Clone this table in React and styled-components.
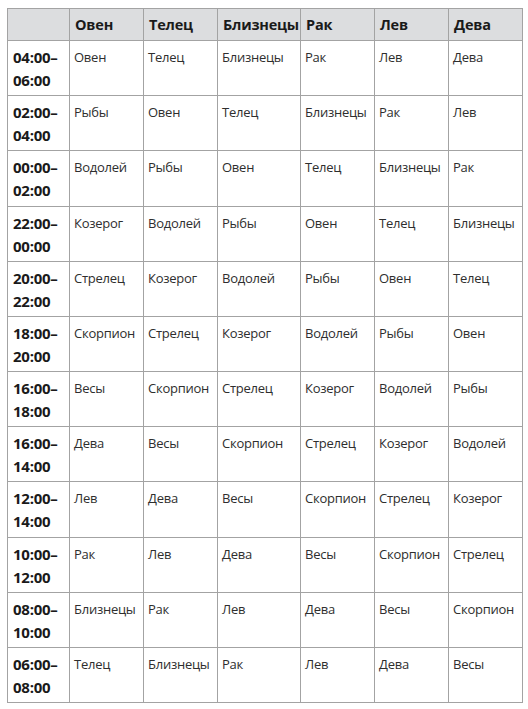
import React from "react";
import styled, { createGlobalStyle } from "styled-components";

const Global = createGlobalStyle`
  html, body { margin: 0; padding: 0; background: #ffffff; }
  body { font-family: "Open Sans", "Noto Sans", sans-serif; color: #1f1f1f; }
`;

const Page = styled.div`
  padding: 8px 0 0 7px;
`;

const Grid = styled.div`
  display: grid;
  grid-template-columns: 62px 74px 74px 83px 74px 74px 74px;
  grid-template-rows: 32px repeat(12, 1fr);
  width: 516px;
  height: 695px;
  box-sizing: border-box;
  border-top: 1px solid #a3a3a3;
  border-left: 1px solid #a3a3a3;
`;

const Cell = styled.div`
  box-sizing: border-box;
  border-right: 1px solid #a3a3a3;
  border-bottom: 1px solid #a3a3a3;
  padding: ${(p) => (p.$time ? "5px 0 0 5px" : "6px 0 0 4px")};
  font-size: 13px;
  letter-spacing: -0.25px;
  line-height: 20px;
  white-space: nowrap;
  overflow: hidden;
  color: #2e2e2e;
`;

const HeadCell = styled.div`
  box-sizing: border-box;
  border-right: 1px solid #a3a3a3;
  border-bottom: 1px solid #a3a3a3;
  background: #dcdddf;
  display: flex;
  align-items: center;
  padding: 0 0 0 5px;
  font-size: 14.5px;
  font-weight: 700;
  letter-spacing: -0.2px;
  color: #1a1a1a;
  white-space: nowrap;
`;

const Time = styled.div`
  font-size: 15px;
  font-weight: 700;
  line-height: 23px;
  color: #1a1a1a;
`;

const signs = ["Овен", "Телец", "Близнецы", "Рак", "Лев", "Дева"];

const rows = [
  ["04:00–", "06:00", ["Овен", "Телец", "Близнецы", "Рак", "Лев", "Дева"]],
  ["02:00–", "04:00", ["Рыбы", "Овен", "Телец", "Близнецы", "Рак", "Лев"]],
  ["00:00–", "02:00", ["Водолей", "Рыбы", "Овен", "Телец", "Близнецы", "Рак"]],
  ["22:00–", "00:00", ["Козерог", "Водолей", "Рыбы", "Овен", "Телец", "Близнецы"]],
  ["20:00–", "22:00", ["Стрелец", "Козерог", "Водолей", "Рыбы", "Овен", "Телец"]],
  ["18:00–", "20:00", ["Скорпион", "Стрелец", "Козерог", "Водолей", "Рыбы", "Овен"]],
  ["16:00–", "18:00", ["Весы", "Скорпион", "Стрелец", "Козерог", "Водолей", "Рыбы"]],
  ["16:00–", "14:00", ["Дева", "Весы", "Скорпион", "Стрелец", "Козерог", "Водолей"]],
  ["12:00–", "14:00", ["Лев", "Дева", "Весы", "Скорпион", "Стрелец", "Козерог"]],
  ["10:00–", "12:00", ["Рак", "Лев", "Дева", "Весы", "Скорпион", "Стрелец"]],
  ["08:00–", "10:00", ["Близнецы", "Рак", "Лев", "Дева", "Весы", "Скорпион"]],
  ["06:00–", "08:00", ["Телец", "Близнецы", "Рак", "Лев", "Дева", "Весы"]],
];

export default function App() {
  return (
    <Page>
      <Global />
      <Grid>
        <HeadCell />
        {signs.map((s) => (
          <HeadCell key={s}>{s}</HeadCell>
        ))}
        {rows.map(([a, b, cells], i) => (
          <React.Fragment key={i}>
            <Cell $time>
              <Time>{a}</Time>
              <Time>{b}</Time>
            </Cell>
            {cells.map((c, j) => (
              <Cell key={j}>{c}</Cell>
            ))}
          </React.Fragment>
        ))}
      </Grid>
    </Page>
  );
}
